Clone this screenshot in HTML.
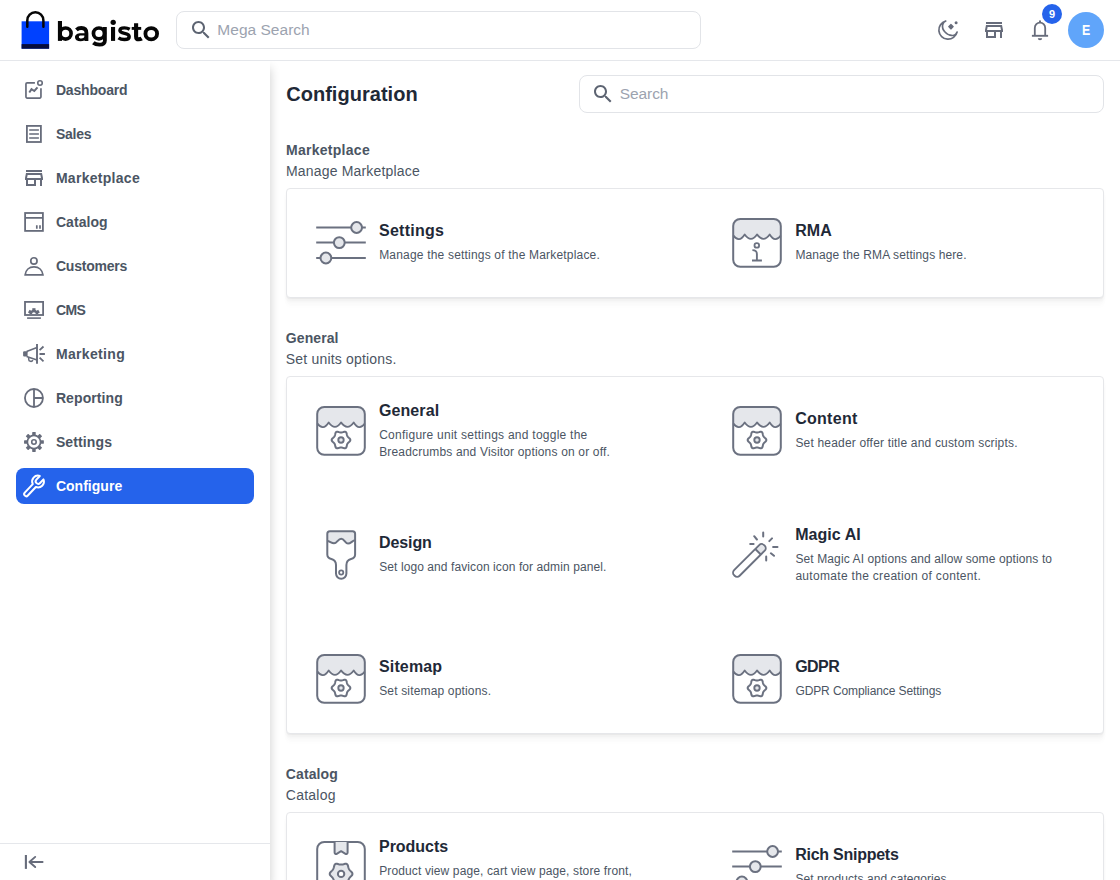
<!DOCTYPE html>
<html><head><meta charset="utf-8"><title>Configuration</title>
<style>
html,body{margin:0;padding:0;background:#fff}
body{width:1120px;height:880px;overflow:hidden;position:relative;font-family:"Liberation Sans",sans-serif}
.t{position:absolute;white-space:pre;line-height:1;font-family:"Liberation Sans",sans-serif}
.ic{position:absolute;overflow:visible}
.abs{position:absolute;box-sizing:border-box}
#side{left:0;top:60px;width:270px;height:820px;background:#fff;box-shadow:0 8px 10px 0 rgba(0,0,0,.2)}
#hdr{left:0;top:0;width:1120px;height:61px;background:#fff;border-bottom:1px solid #e5e7eb}
.inp{border:1px solid #e2e4e8;border-radius:8px;background:#fff}
.card{border:1px solid #e6e7ea;border-radius:4px;background:#fff;box-shadow:0 1px 1px rgba(0,0,0,.03),0 3px 3px rgba(0,0,0,.03),0 6px 4px rgba(0,0,0,.02),0 9px 5px rgba(0,0,0,.012)}
</style></head><body>
<div class="abs" id="side"></div>
<div class="abs" style="left:0;top:843px;width:270px;height:1px;background:#e5e7eb"></div>
<div class="abs" id="hdr"></div>
<div class="abs" style="left:16px;top:468px;width:238px;height:36px;border-radius:8px;background:#2563eb"></div>
<div class="abs inp" style="left:176px;top:11px;width:525px;height:38px"></div>
<div class="abs inp" style="left:579px;top:75px;width:525px;height:38px"></div>
<div class="abs card" style="left:286px;top:188px;width:818px;height:110px"></div>
<div class="abs card" style="left:286px;top:376px;width:818px;height:358px"></div>
<div class="abs card" style="left:286px;top:812px;width:818px;height:140px"></div>
<!-- logo -->
<svg class="ic" style="left:16px;top:6px" width="40" height="48" viewBox="16 6 40 48">
<rect x="21.6" y="21.3" width="27.5" height="27.4" fill="#0041ff"/>
<rect x="21.6" y="44.1" width="27.5" height="4.6" fill="#060c3b"/>
<path d="M27.3 26.8V20.4a8.05 8.05 0 0 1 16.1 0V26.8" fill="none" stroke="#060606" stroke-width="2.5" stroke-linecap="round"/>
</svg>
<svg class="ic" style="left:56px;top:16px" width="106" height="34" viewBox="56 16 106 34" fill="none" stroke="#060606">
<path d="M59.95 21V40.9" stroke-width="4.1"/><ellipse cx="65.6" cy="33.55" rx="5.5" ry="5.55" stroke-width="3.6"/>
<path d="M76.4 29.9Q78.4 28 81.3 28C84.7 28 86.45 29.9 86.45 33.2V40.9" stroke-width="3.8"/>
<path fill="#060606" stroke="none" fill-rule="evenodd" d="M86.45 33.3H81C77.4 33.3 75 34.8 75 37.3 75 39.8 77.2 41.2 80.5 41.2 83.4 41.2 85.5 40.2 86.45 38.5ZM84.6 35.55V36.6C84.1 37.8 82.9 38.45 81.3 38.45 79.8 38.45 78.85 37.9 78.85 36.95 78.85 36 79.7 35.55 81.3 35.55Z"/>
<ellipse cx="98.95" cy="33.45" rx="5.5" ry="5.45" stroke-width="3.7"/>
<path d="M104.9 26.95V40.4C104.9 43.5 102.6 44.6 99.4 44.6 96.8 44.6 94.7 43.9 93.3 42.7" stroke-width="3.8"/>
<path d="M113.05 26.95V40.9" stroke-width="4.1"/><circle cx="113.2" cy="22.3" r="2.65" fill="#060606" stroke="none"/>
<path d="M129.7 29.3C128.1 28.3 126.3 27.9 124.4 27.9 121.5 27.9 119.9 28.9 119.9 30.5 119.9 32.4 121.8 32.9 124.5 33.4 127.4 33.9 129.2 34.6 129.2 36.7 129.2 38.6 127.3 39.5 124.4 39.5 122.2 39.5 120 38.9 118.5 37.8" stroke-width="3.4"/>
<path d="M136.1 23.3V36.4C136.1 38.5 137.2 39.3 138.9 39.3 140 39.3 140.9 39 141.7 38.5" stroke-width="4.1"/><path d="M131.7 28.4H141.2" stroke-width="2.9"/>
<ellipse cx="151.25" cy="33.7" rx="5.85" ry="5.6" stroke-width="3.8"/>
</svg>
<!-- badge + avatar -->
<div class="abs" style="left:1042px;top:4px;width:20px;height:20px;border-radius:10px;background:#2563eb"></div>
<span class="t" style="left:1048.9px;top:8.7px;font-size:11px;font-weight:700;color:#fff">9</span>
<div class="abs" style="left:1068px;top:12px;width:36px;height:36px;border-radius:18px;background:#60a5fa"></div>
<span class="t" style="left:1082px;top:23.1px;font-size:14px;font-weight:700;color:#fff;transform:scaleX(.88);transform-origin:0 0">E</span>
<svg class="ic" style="left:22px;top:78px" width="24" height="24" viewBox="0 0 24 24" ><path fill="none" stroke="#676c7b" stroke-width="1.7" d="M12.9 4.85H5.15a1.2 1.2 0 0 0-1.2 1.2v12.8a1.2 1.2 0 0 0 1.2 1.2h12.6a1.2 1.2 0 0 0 1.2-1.2V10.2"/><circle cx="18" cy="5" r="2.25" fill="none" stroke="#676c7b" stroke-width="1.6"/><path fill="none" stroke="#676c7b" stroke-width="2" stroke-linejoin="miter" d="M7.3 14.5l2.2-3.3 2.8 1.8 3.2-3.6"/></svg>
<svg class="ic" style="left:22px;top:122px" width="24" height="24" viewBox="0 0 24 24" ><rect x="4.9" y="3.9" width="14" height="16.1" fill="none" stroke="#676c7b" stroke-width="1.8"/><path fill="none" stroke="#676c7b" stroke-width="1.7" d="M7.2 8h9.7M7.2 12h9.7M7.2 16h9.7"/></svg>
<svg class="ic" style="left:22px;top:166px" width="24" height="24" viewBox="0 0 24 24" ><path fill="#676c7b" d="M18.36 9l.6 3H5.04l.6-3h12.72M20 4H4v2h16V4zm0 3H4l-1 5v2h1v6h10v-6h4v6h2v-6h1v-2l-1-5zM6 18v-4h6v4H6z"/></svg>
<svg class="ic" style="left:22px;top:210px" width="24" height="24" viewBox="0 0 24 24" ><rect x="3.1" y="3" width="17.8" height="17.9" fill="none" stroke="#676c7b" stroke-width="1.8"/><path fill="none" stroke="#676c7b" stroke-width="1.7" d="M3.1 7.9h17.8M14.8 15.2v3.6M18 15.2v3.6"/></svg>
<svg class="ic" style="left:22px;top:254px" width="24" height="24" viewBox="0 0 24 24" ><circle cx="11.9" cy="6.9" r="3.15" fill="none" stroke="#676c7b" stroke-width="1.7"/><path fill="none" stroke="#676c7b" stroke-width="1.8" d="M3.2 20.9C3.6 16 7.2 12.9 12 12.9s8.4 3.1 8.9 8z"/></svg>
<svg class="ic" style="left:22px;top:298px" width="24" height="24" viewBox="0 0 24 24" ><rect x="3" y="3.9" width="18.1" height="13.1" fill="none" stroke="#676c7b" stroke-width="1.8"/><path stroke="#676c7b" stroke-width="1.6" d="M5.1 20.1h13.8"/><g clip-path="url(#cmsc)"><rect x="10.3" y="10.2" width="3.2" height="3.4" fill="#676c7b" transform="rotate(-60 11.9 16.1)"/><rect x="10.3" y="10.2" width="3.2" height="3.4" fill="#676c7b" transform="rotate(0 11.9 16.1)"/><rect x="10.3" y="10.2" width="3.2" height="3.4" fill="#676c7b" transform="rotate(60 11.9 16.1)"/><rect x="10.3" y="10.2" width="3.2" height="3.4" fill="#676c7b" transform="rotate(-120 11.9 16.1)"/><rect x="10.3" y="10.2" width="3.2" height="3.4" fill="#676c7b" transform="rotate(120 11.9 16.1)"/><rect x="10.3" y="10.2" width="3.2" height="3.4" fill="#676c7b" transform="rotate(180 11.9 16.1)"/><circle cx="11.9" cy="16.1" r="3.1" fill="none" stroke="#676c7b" stroke-width="2.4"/></g><defs><clipPath id="cmsc"><rect x="3.9" y="4.8" width="16.3" height="11.3"/></clipPath></defs></svg>
<svg class="ic" style="left:22px;top:342px" width="24" height="24" viewBox="0 0 24 24" ><path stroke="#676c7b" stroke-width="1.9" d="M15 2.1v19.7"/><path fill="none" stroke="#676c7b" stroke-width="1.6" stroke-linejoin="round" d="M15 5.6L4.6 9.4M4.6 14.4L15 18.1"/><rect x="1.1" y="9.2" width="4.5" height="5.4" rx="1" fill="#676c7b"/><path fill="none" stroke="#676c7b" stroke-width="1.5" d="M6.7 15.3v1.9a2.1 2.1 0 0 0 4.1.7"/><path fill="none" stroke="#676c7b" stroke-width="1.8" d="M17.6 8.2l3.9-3.7M17.5 12h5.4M17.6 15.6l3.9 3.7"/></svg>
<svg class="ic" style="left:22px;top:386px" width="24" height="24" viewBox="0 0 24 24" ><circle cx="11.95" cy="12" r="9" fill="none" stroke="#676c7b" stroke-width="1.8"/><path fill="none" stroke="#676c7b" stroke-width="1.8" d="M12 3v18M12 12h9"/></svg>
<svg class="ic" style="left:22px;top:430px" width="24" height="24" viewBox="0 0 24 24" ><circle cx="11.95" cy="12" r="6.6" fill="none" stroke="#676c7b" stroke-width="1.7"/><rect x="10.2" y="2.0999999999999996" width="3.5" height="3.3" rx="0.4" fill="#676c7b" transform="rotate(0 11.95 12)"/><rect x="10.2" y="2.0999999999999996" width="3.5" height="3.3" rx="0.4" fill="#676c7b" transform="rotate(45 11.95 12)"/><rect x="10.2" y="2.0999999999999996" width="3.5" height="3.3" rx="0.4" fill="#676c7b" transform="rotate(90 11.95 12)"/><rect x="10.2" y="2.0999999999999996" width="3.5" height="3.3" rx="0.4" fill="#676c7b" transform="rotate(135 11.95 12)"/><rect x="10.2" y="2.0999999999999996" width="3.5" height="3.3" rx="0.4" fill="#676c7b" transform="rotate(180 11.95 12)"/><rect x="10.2" y="2.0999999999999996" width="3.5" height="3.3" rx="0.4" fill="#676c7b" transform="rotate(225 11.95 12)"/><rect x="10.2" y="2.0999999999999996" width="3.5" height="3.3" rx="0.4" fill="#676c7b" transform="rotate(270 11.95 12)"/><rect x="10.2" y="2.0999999999999996" width="3.5" height="3.3" rx="0.4" fill="#676c7b" transform="rotate(315 11.95 12)"/><circle cx="11.95" cy="12" r="2.25" fill="none" stroke="#676c7b" stroke-width="1.6"/></svg>
<svg class="ic" style="left:22px;top:474px" width="24" height="24" viewBox="0 0 24 24" ><g transform="translate(4.3 20.1) rotate(-47)"><path fill="none" stroke="#fff" stroke-width="2" stroke-linejoin="round" d="M0 -2.1H11.74A5.85 5.85 0 0 1 22.49 -2.5H17.5A2.5 2.5 0 0 0 17.5 2.5H22.49A5.85 5.85 0 0 1 11.74 2.1H0A2.1 2.1 0 0 1 0 -2.1Z"/></g></svg>
<svg class="ic" style="left:22px;top:850px" width="24" height="24" viewBox="0 0 24 24" ><path fill="none" stroke="#676c7b" stroke-width="2.1" d="M3.9 5v13.9"/><path fill="none" stroke="#676c7b" stroke-width="1.9" stroke-linecap="round" stroke-linejoin="round" d="M20.6 11.95H7.6M13.2 6.9L7.4 11.95l5.8 5.1"/></svg>
<svg class="ic" style="left:188.9px;top:17.6px" width="24" height="24" viewBox="0 0 24 24" ><path fill="#5d6472" d="M15.5 14h-.79l-.28-.27C15.41 12.59 16 11.11 16 9.5 16 5.91 13.09 3 9.5 3S3 5.91 3 9.5 5.91 16 9.5 16c1.61 0 3.09-.59 4.23-1.57l.27.28v.79l5 4.99L20.49 19l-4.99-5zm-6 0C7.01 14 5 11.99 5 9.5S7.01 5 9.5 5 14 7.01 14 9.5 11.99 14 9.5 14z"/></svg>
<svg class="ic" style="left:591.4px;top:81.5px" width="24" height="24" viewBox="0 0 24 24" ><path fill="#5d6472" d="M15.5 14h-.79l-.28-.27C15.41 12.59 16 11.11 16 9.5 16 5.91 13.09 3 9.5 3S3 5.91 3 9.5 5.91 16 9.5 16c1.61 0 3.09-.59 4.23-1.57l.27.28v.79l5 4.99L20.49 19l-4.99-5zm-6 0C7.01 14 5 11.99 5 9.5S7.01 5 9.5 5 14 7.01 14 9.5 11.99 14 9.5 14z"/></svg>
<svg class="ic" style="left:936px;top:18px" width="24" height="24" viewBox="0 0 24 24" ><path fill="none" stroke="#676c7b" stroke-width="1.7" stroke-linejoin="round" d="M9.7 3.0A9.25 9.25 0 1 0 21.1 14.1C20.78 14.53 19.97 16.13 19.20 16.70C18.43 17.27 17.37 17.43 16.50 17.50C15.63 17.57 14.83 17.33 14.00 17.10C13.17 16.87 12.33 16.62 11.50 16.10C10.67 15.58 9.72 14.77 9.00 14.00C8.28 13.23 7.60 12.28 7.20 11.50C6.80 10.72 6.70 10.05 6.60 9.30C6.50 8.55 6.42 7.82 6.60 7.00C6.78 6.18 7.18 5.07 7.70 4.40C8.22 3.73 9.37 3.23 9.70 3.00Z"/><rect x="12.75" y="6.5" width="4.4" height="4.4" rx="0.6" fill="#676c7b" transform="rotate(45 14.95 8.7)"/><circle cx="20.1" cy="4.7" r="1.5" fill="#676c7b"/></svg>
<svg class="ic" style="left:982px;top:18px" width="24" height="24" viewBox="0 0 24 24" ><path fill="#676c7b" d="M18.36 9l.6 3H5.04l.6-3h12.72M20 4H4v2h16V4zm0 3H4l-1 5v2h1v6h10v-6h4v6h2v-6h1v-2l-1-5zM6 18v-4h6v4H6z"/></svg>
<svg class="ic" style="left:1028px;top:18px" width="24" height="24" viewBox="0 0 24 24" ><path fill="none" stroke="#676c7b" stroke-width="1.8" d="M6.8 17.8V9.9a5.2 5.2 0 0 1 10.4 0v7.9"/><path stroke="#676c7b" stroke-width="1.9" d="M3.9 17.8h16.2"/><rect x="11" y="2.2" width="2" height="2.6" rx="1" fill="#676c7b"/><path fill="#676c7b" d="M9.8 20.2h4.4a2.2 2 0 0 1-4.4 0z"/></svg>
<svg class="ic" style="left:311px;top:213px" width="60" height="60" viewBox="0 0 60 60" ><path stroke="#6b7180" stroke-width="2" d="M5.2 14.5h49.6M5.2 29.6h49.6M5.2 45h49.6"/><circle cx="45.6" cy="14.5" r="5.4" fill="#e5e7eb" stroke="#6b7180" stroke-width="2"/><circle cx="28.3" cy="29.6" r="5.4" fill="#e5e7eb" stroke="#6b7180" stroke-width="2"/><circle cx="14.9" cy="45" r="5.4" fill="#e5e7eb" stroke="#6b7180" stroke-width="2"/></svg>
<svg class="ic" style="left:727px;top:213px" width="60" height="60" viewBox="0 0 60 60" ><rect x="6.2" y="5.9" width="47.6" height="47.9" rx="7" fill="#fff"/><path fill="#e5e7eb" d="M6.2 22.4 Q12 30.2 17.7 21.4 Q24 30.2 30 21.4 Q36.4 30.2 42.7 21.4 Q48.2 30.2 53.8 22.4 V12.9 a7 7 0 0 0 -7 -7 H13.2 a7 7 0 0 0 -7 7Z"/><path fill="none" stroke="#6b7180" stroke-width="1.8" stroke-linejoin="round" d="M6.2 22.4 Q12 30.2 17.7 21.4 Q24 30.2 30 21.4 Q36.4 30.2 42.7 21.4 Q48.2 30.2 53.8 22.4"/><rect x="6.2" y="5.9" width="47.6" height="47.9" rx="7" fill="none" stroke="#6b7180" stroke-width="2"/><circle cx="29.8" cy="32.4" r="2.3" fill="none" stroke="#6b7180" stroke-width="1.8"/><path fill="none" stroke="#6b7180" stroke-width="1.9" d="M25.4 37.1c2.9 0 4.5 1.1 4.5 3.8V47.4M25 47.5h9.9"/></svg>
<svg class="ic" style="left:311px;top:401px" width="60" height="60" viewBox="0 0 60 60" ><rect x="6.2" y="5.9" width="47.6" height="47.9" rx="7" fill="#fff"/><path fill="#e5e7eb" d="M6.2 22.4 Q12 30.2 17.7 21.4 Q24 30.2 30 21.4 Q36.4 30.2 42.7 21.4 Q48.2 30.2 53.8 22.4 V12.9 a7 7 0 0 0 -7 -7 H13.2 a7 7 0 0 0 -7 7Z"/><path fill="none" stroke="#6b7180" stroke-width="1.8" stroke-linejoin="round" d="M6.2 22.4 Q12 30.2 17.7 21.4 Q24 30.2 30 21.4 Q36.4 30.2 42.7 21.4 Q48.2 30.2 53.8 22.4"/><rect x="6.2" y="5.9" width="47.6" height="47.9" rx="7" fill="none" stroke="#6b7180" stroke-width="2"/><path fill="none" stroke="#6b7180" stroke-width="2" stroke-linejoin="round" d="M39.36 39.00 L39.22 39.64 L38.84 40.24 L38.32 40.77 L37.78 41.23 L37.30 41.66 L36.91 42.08 L36.60 42.51 L36.34 42.96 L36.12 43.45 L35.95 43.99 L35.82 44.62 L35.69 45.32 L35.49 46.03 L35.17 46.66 L34.68 47.11 L34.05 47.31 L33.34 47.27 L32.63 47.09 L31.96 46.85 L31.35 46.65 L30.79 46.53 L30.26 46.47 L29.74 46.47 L29.21 46.53 L28.65 46.65 L28.04 46.85 L27.37 47.09 L26.66 47.27 L25.95 47.31 L25.32 47.11 L24.83 46.66 L24.51 46.03 L24.31 45.32 L24.18 44.62 L24.05 43.99 L23.88 43.45 L23.66 42.96 L23.40 42.51 L23.09 42.08 L22.70 41.66 L22.22 41.23 L21.68 40.77 L21.16 40.24 L20.78 39.64 L20.64 39.00 L20.78 38.36 L21.16 37.76 L21.68 37.23 L22.22 36.77 L22.70 36.34 L23.09 35.92 L23.40 35.49 L23.66 35.04 L23.88 34.55 L24.05 34.01 L24.18 33.38 L24.31 32.68 L24.51 31.97 L24.83 31.34 L25.32 30.89 L25.95 30.69 L26.66 30.73 L27.37 30.91 L28.04 31.15 L28.65 31.35 L29.21 31.47 L29.74 31.53 L30.26 31.53 L30.79 31.47 L31.35 31.35 L31.96 31.15 L32.63 30.91 L33.34 30.73 L34.05 30.69 L34.68 30.89 L35.17 31.34 L35.49 31.97 L35.69 32.68 L35.82 33.38 L35.95 34.01 L36.12 34.55 L36.34 35.04 L36.60 35.49 L36.91 35.92 L37.30 36.34 L37.78 36.77 L38.32 37.23 L38.84 37.76 L39.22 38.36Z"/><circle cx="30" cy="39" r="2.7" fill="#e5e7eb" stroke="#6b7180" stroke-width="1.9"/></svg>
<svg class="ic" style="left:727px;top:401px" width="60" height="60" viewBox="0 0 60 60" ><rect x="6.2" y="5.9" width="47.6" height="47.9" rx="7" fill="#fff"/><path fill="#e5e7eb" d="M6.2 22.4 Q12 30.2 17.7 21.4 Q24 30.2 30 21.4 Q36.4 30.2 42.7 21.4 Q48.2 30.2 53.8 22.4 V12.9 a7 7 0 0 0 -7 -7 H13.2 a7 7 0 0 0 -7 7Z"/><path fill="none" stroke="#6b7180" stroke-width="1.8" stroke-linejoin="round" d="M6.2 22.4 Q12 30.2 17.7 21.4 Q24 30.2 30 21.4 Q36.4 30.2 42.7 21.4 Q48.2 30.2 53.8 22.4"/><rect x="6.2" y="5.9" width="47.6" height="47.9" rx="7" fill="none" stroke="#6b7180" stroke-width="2"/><path fill="none" stroke="#6b7180" stroke-width="2" stroke-linejoin="round" d="M39.36 39.00 L39.22 39.64 L38.84 40.24 L38.32 40.77 L37.78 41.23 L37.30 41.66 L36.91 42.08 L36.60 42.51 L36.34 42.96 L36.12 43.45 L35.95 43.99 L35.82 44.62 L35.69 45.32 L35.49 46.03 L35.17 46.66 L34.68 47.11 L34.05 47.31 L33.34 47.27 L32.63 47.09 L31.96 46.85 L31.35 46.65 L30.79 46.53 L30.26 46.47 L29.74 46.47 L29.21 46.53 L28.65 46.65 L28.04 46.85 L27.37 47.09 L26.66 47.27 L25.95 47.31 L25.32 47.11 L24.83 46.66 L24.51 46.03 L24.31 45.32 L24.18 44.62 L24.05 43.99 L23.88 43.45 L23.66 42.96 L23.40 42.51 L23.09 42.08 L22.70 41.66 L22.22 41.23 L21.68 40.77 L21.16 40.24 L20.78 39.64 L20.64 39.00 L20.78 38.36 L21.16 37.76 L21.68 37.23 L22.22 36.77 L22.70 36.34 L23.09 35.92 L23.40 35.49 L23.66 35.04 L23.88 34.55 L24.05 34.01 L24.18 33.38 L24.31 32.68 L24.51 31.97 L24.83 31.34 L25.32 30.89 L25.95 30.69 L26.66 30.73 L27.37 30.91 L28.04 31.15 L28.65 31.35 L29.21 31.47 L29.74 31.53 L30.26 31.53 L30.79 31.47 L31.35 31.35 L31.96 31.15 L32.63 30.91 L33.34 30.73 L34.05 30.69 L34.68 30.89 L35.17 31.34 L35.49 31.97 L35.69 32.68 L35.82 33.38 L35.95 34.01 L36.12 34.55 L36.34 35.04 L36.60 35.49 L36.91 35.92 L37.30 36.34 L37.78 36.77 L38.32 37.23 L38.84 37.76 L39.22 38.36Z"/><circle cx="30" cy="39" r="2.7" fill="#e5e7eb" stroke="#6b7180" stroke-width="1.9"/></svg>
<svg class="ic" style="left:311px;top:525px" width="60" height="60" viewBox="0 0 60 60" ><path fill="#fff" d="M18.8 6.2H41.6a2.5 2.5 0 0 1 2.5 2.5V29.5C44.1 32.5 42 33.5 40 34 37 34.8 35.4 36.5 35.4 40V48.5a5.2 5.2 0 0 1-10.4 0V40C25 36.5 23.4 34.8 20.4 34 18.4 33.5 16.3 32.5 16.3 29.5V8.7a2.5 2.5 0 0 1 2.5-2.5Z"/><path fill="#e5e7eb" d="M16.3 16C18.5 16 20.5 18.3 23 18.3 26 18.3 27 13.7 30.2 13.7 33.4 13.7 34.3 18.6 37 18.6 40 18.6 41.5 15.3 44.1 15.3V8.7a2.5 2.5 0 0 0-2.5-2.5H18.8a2.5 2.5 0 0 0-2.5 2.5Z"/><path fill="none" stroke="#6b7180" stroke-width="2" d="M16.3 16C18.5 16 20.5 18.3 23 18.3 26 18.3 27 13.7 30.2 13.7 33.4 13.7 34.3 18.6 37 18.6 40 18.6 41.5 15.3 44.1 15.3"/><path fill="none" stroke="#6b7180" stroke-width="2" d="M18.8 6.2H41.6a2.5 2.5 0 0 1 2.5 2.5V29.5C44.1 32.5 42 33.5 40 34 37 34.8 35.4 36.5 35.4 40V48.5a5.2 5.2 0 0 1-10.4 0V40C25 36.5 23.4 34.8 20.4 34 18.4 33.5 16.3 32.5 16.3 29.5V8.7a2.5 2.5 0 0 1 2.5-2.5Z"/><circle cx="30.2" cy="47.5" r="2.1" fill="none" stroke="#6b7180" stroke-width="1.8"/></svg>
<svg class="ic" style="left:727px;top:525px" width="60" height="60" viewBox="0 0 60 60" ><g transform="translate(22.4 35.4) rotate(-45)"><rect x="-21.25" y="-3.9" width="42.5" height="7.8" rx="3.5" fill="#fff"/><path fill="#e5e7eb" d="M12.2 -3.9H17.75a3.5 3.5 0 0 1 3.5 3.5V.4a3.5 3.5 0 0 1-3.5 3.5H12.2Z"/><path stroke="#6b7180" stroke-width="1.9" d="M12.2 -3.9V3.9"/><rect x="-21.25" y="-3.9" width="42.5" height="7.8" rx="3.5" fill="none" stroke="#6b7180" stroke-width="1.9"/></g><path fill="none" stroke="#6b7180" stroke-width="2" stroke-linecap="round" d="M36.2 7.5V11.4M27.2 11.2l2.7 3.3M23.2 18.9h3.4M42.3 16.1l2.7-2.7M46.1 22h4.4M43.9 28.3l3.1 2.5M39.2 31.4v4.1"/></svg>
<svg class="ic" style="left:311px;top:649px" width="60" height="60" viewBox="0 0 60 60" ><rect x="6.2" y="5.9" width="47.6" height="47.9" rx="7" fill="#fff"/><path fill="#e5e7eb" d="M6.2 22.4 Q12 30.2 17.7 21.4 Q24 30.2 30 21.4 Q36.4 30.2 42.7 21.4 Q48.2 30.2 53.8 22.4 V12.9 a7 7 0 0 0 -7 -7 H13.2 a7 7 0 0 0 -7 7Z"/><path fill="none" stroke="#6b7180" stroke-width="1.8" stroke-linejoin="round" d="M6.2 22.4 Q12 30.2 17.7 21.4 Q24 30.2 30 21.4 Q36.4 30.2 42.7 21.4 Q48.2 30.2 53.8 22.4"/><rect x="6.2" y="5.9" width="47.6" height="47.9" rx="7" fill="none" stroke="#6b7180" stroke-width="2"/><path fill="none" stroke="#6b7180" stroke-width="2" stroke-linejoin="round" d="M39.36 39.00 L39.22 39.64 L38.84 40.24 L38.32 40.77 L37.78 41.23 L37.30 41.66 L36.91 42.08 L36.60 42.51 L36.34 42.96 L36.12 43.45 L35.95 43.99 L35.82 44.62 L35.69 45.32 L35.49 46.03 L35.17 46.66 L34.68 47.11 L34.05 47.31 L33.34 47.27 L32.63 47.09 L31.96 46.85 L31.35 46.65 L30.79 46.53 L30.26 46.47 L29.74 46.47 L29.21 46.53 L28.65 46.65 L28.04 46.85 L27.37 47.09 L26.66 47.27 L25.95 47.31 L25.32 47.11 L24.83 46.66 L24.51 46.03 L24.31 45.32 L24.18 44.62 L24.05 43.99 L23.88 43.45 L23.66 42.96 L23.40 42.51 L23.09 42.08 L22.70 41.66 L22.22 41.23 L21.68 40.77 L21.16 40.24 L20.78 39.64 L20.64 39.00 L20.78 38.36 L21.16 37.76 L21.68 37.23 L22.22 36.77 L22.70 36.34 L23.09 35.92 L23.40 35.49 L23.66 35.04 L23.88 34.55 L24.05 34.01 L24.18 33.38 L24.31 32.68 L24.51 31.97 L24.83 31.34 L25.32 30.89 L25.95 30.69 L26.66 30.73 L27.37 30.91 L28.04 31.15 L28.65 31.35 L29.21 31.47 L29.74 31.53 L30.26 31.53 L30.79 31.47 L31.35 31.35 L31.96 31.15 L32.63 30.91 L33.34 30.73 L34.05 30.69 L34.68 30.89 L35.17 31.34 L35.49 31.97 L35.69 32.68 L35.82 33.38 L35.95 34.01 L36.12 34.55 L36.34 35.04 L36.60 35.49 L36.91 35.92 L37.30 36.34 L37.78 36.77 L38.32 37.23 L38.84 37.76 L39.22 38.36Z"/><circle cx="30" cy="39" r="2.7" fill="#e5e7eb" stroke="#6b7180" stroke-width="1.9"/></svg>
<svg class="ic" style="left:727px;top:649px" width="60" height="60" viewBox="0 0 60 60" ><rect x="6.2" y="5.9" width="47.6" height="47.9" rx="7" fill="#fff"/><path fill="#e5e7eb" d="M6.2 22.4 Q12 30.2 17.7 21.4 Q24 30.2 30 21.4 Q36.4 30.2 42.7 21.4 Q48.2 30.2 53.8 22.4 V12.9 a7 7 0 0 0 -7 -7 H13.2 a7 7 0 0 0 -7 7Z"/><path fill="none" stroke="#6b7180" stroke-width="1.8" stroke-linejoin="round" d="M6.2 22.4 Q12 30.2 17.7 21.4 Q24 30.2 30 21.4 Q36.4 30.2 42.7 21.4 Q48.2 30.2 53.8 22.4"/><rect x="6.2" y="5.9" width="47.6" height="47.9" rx="7" fill="none" stroke="#6b7180" stroke-width="2"/><path fill="none" stroke="#6b7180" stroke-width="2" stroke-linejoin="round" d="M39.36 39.00 L39.22 39.64 L38.84 40.24 L38.32 40.77 L37.78 41.23 L37.30 41.66 L36.91 42.08 L36.60 42.51 L36.34 42.96 L36.12 43.45 L35.95 43.99 L35.82 44.62 L35.69 45.32 L35.49 46.03 L35.17 46.66 L34.68 47.11 L34.05 47.31 L33.34 47.27 L32.63 47.09 L31.96 46.85 L31.35 46.65 L30.79 46.53 L30.26 46.47 L29.74 46.47 L29.21 46.53 L28.65 46.65 L28.04 46.85 L27.37 47.09 L26.66 47.27 L25.95 47.31 L25.32 47.11 L24.83 46.66 L24.51 46.03 L24.31 45.32 L24.18 44.62 L24.05 43.99 L23.88 43.45 L23.66 42.96 L23.40 42.51 L23.09 42.08 L22.70 41.66 L22.22 41.23 L21.68 40.77 L21.16 40.24 L20.78 39.64 L20.64 39.00 L20.78 38.36 L21.16 37.76 L21.68 37.23 L22.22 36.77 L22.70 36.34 L23.09 35.92 L23.40 35.49 L23.66 35.04 L23.88 34.55 L24.05 34.01 L24.18 33.38 L24.31 32.68 L24.51 31.97 L24.83 31.34 L25.32 30.89 L25.95 30.69 L26.66 30.73 L27.37 30.91 L28.04 31.15 L28.65 31.35 L29.21 31.47 L29.74 31.53 L30.26 31.53 L30.79 31.47 L31.35 31.35 L31.96 31.15 L32.63 30.91 L33.34 30.73 L34.05 30.69 L34.68 30.89 L35.17 31.34 L35.49 31.97 L35.69 32.68 L35.82 33.38 L35.95 34.01 L36.12 34.55 L36.34 35.04 L36.60 35.49 L36.91 35.92 L37.30 36.34 L37.78 36.77 L38.32 37.23 L38.84 37.76 L39.22 38.36Z"/><circle cx="30" cy="39" r="2.7" fill="#e5e7eb" stroke="#6b7180" stroke-width="1.9"/></svg>
<svg class="ic" style="left:311px;top:836px" width="60" height="60" viewBox="0 0 60 60" ><rect x="6.2" y="5.9" width="47.6" height="47.9" rx="7" fill="#fff" stroke="#6b7180" stroke-width="2"/><path fill="#e5e7eb" stroke="#6b7180" stroke-width="2" stroke-linejoin="round" d="M23.6 5.9V16.6a1.4 1.4 0 0 0 2.1 1.2L30.1 15.2 34.5 17.8a1.4 1.4 0 0 0 2.1-1.2V5.9"/><path fill="#e5e7eb" stroke="#6b7180" stroke-width="2" stroke-linejoin="round" d="M41.48 37.90 L41.32 38.68 L40.88 39.42 L40.29 40.07 L39.68 40.65 L39.13 41.19 L38.68 41.72 L38.30 42.26 L37.98 42.82 L37.70 43.42 L37.46 44.08 L37.27 44.82 L37.07 45.65 L36.80 46.48 L36.39 47.22 L35.79 47.75 L35.03 48.01 L34.18 48.00 L33.32 47.81 L32.51 47.57 L31.77 47.37 L31.08 47.24 L30.42 47.18 L29.78 47.18 L29.12 47.24 L28.43 47.37 L27.69 47.57 L26.88 47.81 L26.02 48.00 L25.17 48.01 L24.41 47.75 L23.81 47.22 L23.40 46.48 L23.13 45.65 L22.93 44.82 L22.74 44.08 L22.50 43.42 L22.22 42.82 L21.90 42.26 L21.52 41.72 L21.07 41.19 L20.52 40.65 L19.91 40.07 L19.32 39.42 L18.88 38.68 L18.72 37.90 L18.88 37.12 L19.32 36.38 L19.91 35.73 L20.52 35.15 L21.07 34.61 L21.52 34.08 L21.90 33.54 L22.22 32.98 L22.50 32.38 L22.74 31.72 L22.93 30.98 L23.13 30.15 L23.40 29.32 L23.81 28.58 L24.41 28.05 L25.17 27.79 L26.02 27.80 L26.88 27.99 L27.69 28.23 L28.43 28.43 L29.12 28.56 L29.78 28.62 L30.42 28.62 L31.08 28.56 L31.77 28.43 L32.51 28.23 L33.32 27.99 L34.18 27.80 L35.03 27.79 L35.79 28.05 L36.39 28.58 L36.80 29.32 L37.07 30.15 L37.27 30.98 L37.46 31.72 L37.70 32.38 L37.98 32.98 L38.30 33.54 L38.68 34.08 L39.13 34.61 L39.68 35.15 L40.29 35.73 L40.88 36.38 L41.32 37.12Z"/><circle cx="30.1" cy="37.9" r="3.2" fill="#fff" stroke="#6b7180" stroke-width="2"/></svg>
<svg class="ic" style="left:727px;top:837px" width="60" height="60" viewBox="0 0 60 60" ><path stroke="#6b7180" stroke-width="2" d="M5.2 14.5h49.6M5.2 29.6h49.6M5.2 45h49.6"/><circle cx="45.6" cy="14.5" r="5.4" fill="#e5e7eb" stroke="#6b7180" stroke-width="2"/><circle cx="28.3" cy="29.6" r="5.4" fill="#e5e7eb" stroke="#6b7180" stroke-width="2"/><circle cx="14.9" cy="45" r="5.4" fill="#e5e7eb" stroke="#6b7180" stroke-width="2"/></svg>
<span class="t" style="left:217.32px;top:22.48px;font-size:15.5px;font-weight:400;color:#9ca3af;letter-spacing:0.020px;">Mega Search</span>
<span class="t" style="left:55.90px;top:82.90px;font-size:14px;font-weight:700;color:#4b5563;letter-spacing:-0.178px;">Dashboard</span>
<span class="t" style="left:55.90px;top:126.90px;font-size:14px;font-weight:700;color:#4b5563;letter-spacing:-0.248px;">Sales</span>
<span class="t" style="left:55.90px;top:170.90px;font-size:14px;font-weight:700;color:#4b5563;letter-spacing:0.286px;">Marketplace</span>
<span class="t" style="left:55.90px;top:214.90px;font-size:14px;font-weight:700;color:#4b5563;letter-spacing:0.059px;">Catalog</span>
<span class="t" style="left:55.90px;top:258.90px;font-size:14px;font-weight:700;color:#4b5563;letter-spacing:-0.205px;">Customers</span>
<span class="t" style="left:55.90px;top:302.90px;font-size:14px;font-weight:700;color:#4b5563;letter-spacing:-0.562px;">CMS</span>
<span class="t" style="left:55.90px;top:346.90px;font-size:14px;font-weight:700;color:#4b5563;letter-spacing:0.347px;">Marketing</span>
<span class="t" style="left:55.90px;top:390.90px;font-size:14px;font-weight:700;color:#4b5563;letter-spacing:0.099px;">Reporting</span>
<span class="t" style="left:55.90px;top:434.90px;font-size:14px;font-weight:700;color:#4b5563;letter-spacing:0.124px;">Settings</span>
<span class="t" style="left:55.90px;top:478.90px;font-size:14px;font-weight:700;color:#ffffff;letter-spacing:0.024px;">Configure</span>
<span class="t" style="left:286.20px;top:83.77px;font-size:20px;font-weight:700;color:#1f2937;letter-spacing:0.034px;">Configuration</span>
<span class="t" style="left:619.83px;top:86.38px;font-size:15.5px;font-weight:400;color:#9ca3af;letter-spacing:-0.105px;">Search</span>
<span class="t" style="left:286.00px;top:142.85px;font-size:14px;font-weight:700;color:#4b5563;letter-spacing:0.276px;">Marketplace</span>
<span class="t" style="left:286.00px;top:163.55px;font-size:14px;font-weight:400;color:#4b5563;letter-spacing:0.174px;">Manage Marketplace</span>
<span class="t" style="left:285.80px;top:330.90px;font-size:14px;font-weight:700;color:#4b5563;letter-spacing:0.093px;">General</span>
<span class="t" style="left:285.80px;top:351.75px;font-size:14px;font-weight:400;color:#4b5563;letter-spacing:0.188px;">Set units options.</span>
<span class="t" style="left:285.80px;top:766.90px;font-size:14px;font-weight:700;color:#4b5563;letter-spacing:0.093px;">Catalog</span>
<span class="t" style="left:285.80px;top:787.75px;font-size:14px;font-weight:400;color:#4b5563;letter-spacing:0.239px;">Catalog</span>
<span class="t" style="left:379.00px;top:223.36px;font-size:16px;font-weight:700;color:#1f2937;letter-spacing:0.246px;">Settings</span>
<span class="t" style="left:379.20px;top:248.84px;font-size:12px;font-weight:400;color:#4b5563;letter-spacing:0.188px;">Manage the settings of the Marketplace.</span>
<span class="t" style="left:795.20px;top:223.36px;font-size:16px;font-weight:700;color:#1f2937;letter-spacing:0.081px;">RMA</span>
<span class="t" style="left:795.40px;top:248.84px;font-size:12px;font-weight:400;color:#4b5563;letter-spacing:0.107px;">Manage the RMA settings here.</span>
<span class="t" style="left:379.00px;top:402.96px;font-size:16px;font-weight:700;color:#1f2937;letter-spacing:0.084px;">General</span>
<span class="t" style="left:379.20px;top:428.84px;font-size:12px;font-weight:400;color:#4b5563;letter-spacing:0.251px;">Configure unit settings and toggle the</span>
<span class="t" style="left:379.20px;top:445.84px;font-size:12px;font-weight:400;color:#4b5563;letter-spacing:0.169px;">Breadcrumbs and Visitor options on or off.</span>
<span class="t" style="left:795.20px;top:411.36px;font-size:16px;font-weight:700;color:#1f2937;letter-spacing:0.277px;">Content</span>
<span class="t" style="left:795.40px;top:436.84px;font-size:12px;font-weight:400;color:#4b5563;letter-spacing:0.184px;">Set header offer title and custom scripts.</span>
<span class="t" style="left:379.00px;top:535.36px;font-size:16px;font-weight:700;color:#1f2937;letter-spacing:-0.099px;">Design</span>
<span class="t" style="left:379.20px;top:560.84px;font-size:12px;font-weight:400;color:#4b5563;letter-spacing:0.088px;">Set logo and favicon icon for admin panel.</span>
<span class="t" style="left:795.20px;top:526.96px;font-size:16px;font-weight:700;color:#1f2937;letter-spacing:0.057px;">Magic AI</span>
<span class="t" style="left:795.40px;top:552.84px;font-size:12px;font-weight:400;color:#4b5563;letter-spacing:0.114px;">Set Magic AI options and allow some options to</span>
<span class="t" style="left:795.40px;top:569.84px;font-size:12px;font-weight:400;color:#4b5563;letter-spacing:0.309px;">automate the creation of content.</span>
<span class="t" style="left:379.00px;top:659.36px;font-size:16px;font-weight:700;color:#1f2937;letter-spacing:0.142px;">Sitemap</span>
<span class="t" style="left:379.20px;top:684.84px;font-size:12px;font-weight:400;color:#4b5563;letter-spacing:0.164px;">Set sitemap options.</span>
<span class="t" style="left:795.20px;top:659.36px;font-size:16px;font-weight:700;color:#1f2937;letter-spacing:-0.545px;">GDPR</span>
<span class="t" style="left:795.40px;top:684.84px;font-size:12px;font-weight:400;color:#4b5563;letter-spacing:-0.096px;">GDPR Compliance Settings</span>
<span class="t" style="left:379.00px;top:838.96px;font-size:16px;font-weight:700;color:#1f2937;letter-spacing:-0.035px;">Products</span>
<span class="t" style="left:379.20px;top:864.84px;font-size:12px;font-weight:400;color:#4b5563;letter-spacing:0.126px;">Product view page, cart view page, store front,</span>
<span class="t" style="left:379.20px;top:881.84px;font-size:12px;font-weight:400;color:#4b5563;letter-spacing:0.261px;">wishlist and attributes settings.</span>
<span class="t" style="left:795.20px;top:847.36px;font-size:16px;font-weight:700;color:#1f2937;letter-spacing:-0.257px;">Rich Snippets</span>
<span class="t" style="left:795.40px;top:872.84px;font-size:12px;font-weight:400;color:#4b5563;letter-spacing:0.068px;">Set products and categories.</span>
</body></html>
